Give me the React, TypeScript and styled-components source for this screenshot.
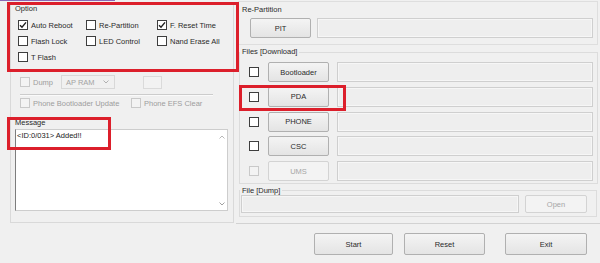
import React from "react";
import styled, { createGlobalStyle } from "styled-components";

const Global = createGlobalStyle`
  html, body { margin: 0; padding: 0; background: #f0f0f0; }
  body { font-family: "Liberation Sans", Arial, sans-serif; font-size: 7.5px; color: #2a2a2a; }
  * { box-sizing: border-box; }
  #root { width: 600px; height: 263px; }
`;

const Root = styled.div`
  position: relative;
  width: 600px;
  height: 263px;
  overflow: hidden;
  background: #f0f0f0;
`;

const TitleEdge = styled.div`
  width: 115px;
  height: 1px;
  background: #8a68b6;
`;

const Body = styled.div`
  display: grid;
  grid-template-columns: 236px 364px;
  height: 223px;
`;

/* ---------- left column ---------- */
const LeftCol = styled.div`
  padding: 2px 2px 0 10px;
`;

const Frame = styled.div`
  height: 220px;
  border: 1px solid #d9d9d9;
  display: flex;
  flex-direction: column;
`;

const Caption = styled.div<{ $mt?: number }>`
  line-height: 10px;
  height: 10px;
  padding-left: 4px;
  margin-top: ${(p) => p.$mt ?? 0}px;
  color: #2a2a2a;
  white-space: nowrap;
`;

const CheckGrid = styled.div`
  display: grid;
  grid-template-columns: 68px 71px 1fr;
  grid-auto-rows: 16px;
  margin-top: 3px;
  padding-left: 7px;
`;

const Item = styled.label<{ $w?: number; $disabled?: boolean }>`
  display: flex;
  align-items: center;
  gap: 3px;
  white-space: nowrap;
  width: ${(p) => (p.$w ? `${p.$w}px` : "auto")};
  color: ${(p) => (p.$disabled ? "#9d9d9d" : "#2a2a2a")};
`;

const Box = styled.span<{ $disabled?: boolean }>`
  width: 10px;
  height: 10px;
  flex-shrink: 0;
  display: inline-flex;
  align-items: center;
  justify-content: center;
  border: 1px solid ${(p) => (p.$disabled ? "#c9c9c9" : "#3e3e3e")};
  background: ${(p) => (p.$disabled ? "#f3f3f3" : "#ffffff")};
`;

const DumpRow = styled.div`
  display: flex;
  align-items: center;
  height: 14px;
  margin-top: 10px;
  padding-left: 9px;
`;

const Select = styled.div`
  width: 54px;
  height: 14px;
  border: 1px solid #d8d8d8;
  background: #f0f0f0;
  color: #a3a3a3;
  display: flex;
  align-items: center;
  justify-content: space-between;
  padding: 0 5px 0 4px;
`;

const SmallField = styled.div`
  width: 19px;
  height: 13px;
  margin-left: 28px;
  border: 1px solid #dadada;
  background: #f2f2f2;
`;

const Separator = styled.div`
  height: 1px;
  width: 193px;
  margin: 5px 0 0 9px;
  background: #cccccc;
  box-shadow: 0 1px 0 #fafafa;
`;

const PhoneRow = styled.div`
  display: flex;
  align-items: center;
  height: 12px;
  margin-top: 2px;
  padding-left: 9px;
`;

const MessageBox = styled.div`
  margin: 1px 0 0 4px;
  width: 213px;
  height: 82px;
  border: 1px solid #cdcdcd;
  border-left-color: #7d7d7d;
  background: #ffffff;
  display: flex;
`;

const MessageText = styled.div`
  flex: 1;
  padding: 1px 0 0 1px;
  line-height: 10px;
  color: #222;
  white-space: nowrap;
`;

const ScrollCol = styled.div`
  width: 10px;
  display: flex;
  flex-direction: column;
  justify-content: space-between;
  align-items: center;
  padding: 5px 0 4px;
`;

/* ---------- right column ---------- */
const RightCol = styled.div`
  padding-left: 2px;
  height: 223px;
  border-bottom: 1px solid #d2d2d2;
`;

const RepartGroup = styled.div`
  width: 360px;
  height: 44px;
  border: 1px solid #dedede;
`;

const RepartCaption = styled.div`
  line-height: 10px;
  height: 10px;
  margin-top: 3px;
  padding-left: 3px;
`;

const Row = styled.div<{ $pl?: number; $mt?: number }>`
  display: flex;
  align-items: center;
  padding-left: ${(p) => p.$pl ?? 0}px;
  margin-top: ${(p) => p.$mt ?? 0}px;
`;

const Button = styled.div<{ $w: number; $h?: number; $disabled?: boolean; $ml?: number }>`
  width: ${(p) => p.$w}px;
  height: ${(p) => p.$h ?? 20}px;
  margin-left: ${(p) => p.$ml ?? 0}px;
  flex-shrink: 0;
  display: flex;
  align-items: center;
  justify-content: center;
  border: 1px solid ${(p) => (p.$disabled ? "#d3d3d3" : "#b0b0b0")};
  border-radius: 2px;
  background: ${(p) =>
    p.$disabled ? "#f3f3f3" : "linear-gradient(#f4f4f4, #e4e4e4)"};
  color: ${(p) => (p.$disabled ? "#a6a6a6" : "#2a2a2a")};
  white-space: nowrap;
`;

const Field = styled.div<{ $w: number; $h?: number; $ml?: number }>`
  width: ${(p) => p.$w}px;
  height: ${(p) => p.$h ?? 20}px;
  margin-left: ${(p) => p.$ml ?? 0}px;
  border: 1px solid #cfcfcf;
  background: #eeeeee;
  box-shadow: inset 0 0 0 1px #f6f6f6;
`;

const Group = styled.fieldset<{ $w: number; $mt: number; $pb: number }>`
  margin: ${(p) => p.$mt}px 0 0 1px;
  width: ${(p) => p.$w}px;
  padding: 0 0 ${(p) => p.$pb}px 0;
  border: 1px solid #dcdcdc;
  min-width: 0;
`;

const Legend = styled.legend<{ $lh: number }>`
  padding: 0 2px;
  margin: 0;
  line-height: ${(p) => p.$lh}px;
  font-size: 7.5px;
  color: #2a2a2a;
`;

const FileRows = styled.div`
  display: flex;
  flex-direction: column;
  gap: 4.75px;
  padding: 5px 0 0 9px;
`;

const FileRow = styled.div`
  display: flex;
  align-items: center;
  height: 20px;
`;

const BottomBar = styled.div`
  display: flex;
  justify-content: flex-end;
  padding: 9px 13px 0 0;
`;

/* ---------- overlay annotations ---------- */
const RedMark = styled.div<{ $x: number; $y: number; $w: number; $h: number }>`
  position: absolute;
  left: ${(p) => p.$x}px;
  top: ${(p) => p.$y}px;
  width: ${(p) => p.$w}px;
  height: ${(p) => p.$h}px;
  border: 3px solid #dc1f2b;
  pointer-events: none;
`;

const Check = () => (
  <svg width="8" height="8" viewBox="0 0 8 8">
    <polyline points="1,4.2 3,6.3 7,1.4" fill="none" stroke="#1e1e1e" strokeWidth="1.4" />
  </svg>
);

const CheckItem = ({
  label,
  checked,
  disabled,
  w,
}: {
  label: string;
  checked?: boolean;
  disabled?: boolean;
  w?: number;
}) => (
  <Item $w={w} $disabled={disabled}>
    <Box $disabled={disabled}>{checked && <Check />}</Box>
    <span>{label}</span>
  </Item>
);

const Chevron = ({ dir, color = "#9a9a9a" }: { dir: "up" | "down"; color?: string }) => (
  <svg width="6" height="4" viewBox="0 0 6 4">
    <polyline
      points={dir === "up" ? "0.5,3.5 3,1 5.5,3.5" : "0.5,0.5 3,3 5.5,0.5"}
      fill="none"
      stroke={color}
      strokeWidth="1"
    />
  </svg>
);

const files: { name: string; disabled?: boolean }[] = [
  { name: "Bootloader" },
  { name: "PDA" },
  { name: "PHONE" },
  { name: "CSC" },
  { name: "UMS", disabled: true },
];

export default function App() {
  return (
    <Root>
      <Global />
      <TitleEdge />
      <Body>
        <LeftCol>
          <Frame>
            <Caption>Option</Caption>
            <CheckGrid>
              <CheckItem label="Auto Reboot" checked />
              <CheckItem label="Re-Partition" />
              <CheckItem label="F. Reset Time" checked />
              <CheckItem label="Flash Lock" />
              <CheckItem label="LED Control" />
              <CheckItem label="Nand Erase All" />
              <CheckItem label="T Flash" />
            </CheckGrid>
            <DumpRow>
              <CheckItem label="Dump" disabled w={41} />
              <Select>
                <span>AP RAM</span>
                <Chevron dir="down" color="#b0b0b0" />
              </Select>
              <SmallField />
            </DumpRow>
            <Separator />
            <PhoneRow>
              <CheckItem label="Phone Bootloader Update" disabled w={111} />
              <CheckItem label="Phone EFS Clear" disabled />
            </PhoneRow>
            <Caption $mt={9}>Message</Caption>
            <MessageBox>
              <MessageText>&lt;ID:0/031&gt; Added!!</MessageText>
              <ScrollCol>
                <Chevron dir="up" color="#b8b8b8" />
                <Chevron dir="down" color="#a0a0a0" />
              </ScrollCol>
            </MessageBox>
          </Frame>
        </LeftCol>

        <RightCol>
          <RepartGroup>
            <RepartCaption>Re-Partition</RepartCaption>
            <Row $pl={11} $mt={3}>
              <Button $w={61}>PIT</Button>
              <Field $w={276} $ml={6} />
            </Row>
          </RepartGroup>

          <Group $w={359} $mt={2} $pb={2}>
            <Legend $lh={10}>Files [Download]</Legend>
            <FileRows>
              {files.map((f) => (
                <FileRow key={f.name}>
                  <Box $disabled={f.disabled} />
                  <Button $w={61} $ml={9} $disabled={f.disabled}>
                    {f.name}
                  </Button>
                  <Field $w={256} $ml={8} />
                </FileRow>
              ))}
            </FileRows>
          </Group>

          <Group $w={358} $mt={2} $pb={3}>
            <Legend $lh={9}>File [Dump]</Legend>
            <Row $pl={1}>
              <Field $w={278} $h={18} />
              <Button $w={62} $h={18} $ml={6} $disabled>
                Open
              </Button>
            </Row>
          </Group>
        </RightCol>
      </Body>

      <BottomBar>
        <Button $w={79} $h={22}>Start</Button>
        <Button $w={81} $h={22} $ml={11}>Reset</Button>
        <Button $w={82} $h={22} $ml={20}>Exit</Button>
      </BottomBar>

      <RedMark $x={7} $y={2} $w={232} $h={70} />
      <RedMark $x={7} $y={117} $w={104} $h={33} />
      <RedMark $x={239} $y={85} $w={107} $h={26} />
    </Root>
  );
}
